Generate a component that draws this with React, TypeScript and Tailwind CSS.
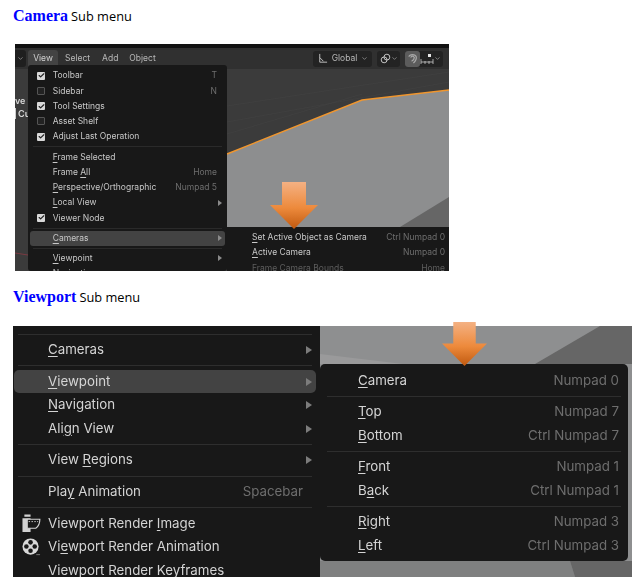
import React from "react";
import { ChevronDown, Check } from "lucide-react";

const sans = "[font-family:Inter,'Noto_Sans',sans-serif]";

type RowProps = {
    pre?: string;
    mark?: string;
    post?: string;
    keys?: string;
    sub?: boolean;
    active?: boolean;
    check?: boolean;
    dim?: boolean;
    icon?: React.ReactNode;
};

// underlined accelerator letter, as Blender draws it
const Label = ({ pre, mark, post }: RowProps) => (
    <span className="whitespace-pre">
        {pre}
        {mark && <span className="underline underline-offset-2 decoration-1">{mark}</span>}
        {post}
    </span>
);

const Arrow = ({ small }: { small?: boolean }) => (
    <span
        className={
            small
                ? "block w-0 h-0 border-y-[3px] border-y-transparent border-l-[4px] border-l-[#8a8a8a]"
                : "block w-0 h-0 border-y-[4px] border-y-transparent border-l-[6px] border-l-[#7c7c7c]"
        }
    />
);

const SmallRow = (props: RowProps) => (
    <div
        className={`flex items-center h-[15.25px] shrink-0 mx-[2px] rounded-[3px] text-[8.5px] ${
            props.active ? "bg-[#434343]" : ""
        } ${props.dim ? "text-[#6a6a6a]" : "text-[#c8c8c8]"}`}
    >
        <span className="w-[22.7px] flex justify-end shrink-0 pr-[7.7px]">
            {props.check === true && (
                <span className="w-[8px] h-[8px] rounded-[1px] bg-[#d8d8d8] flex items-center justify-center">
                    <Check size={7} strokeWidth={4} color="#222" />
                </span>
            )}
            {props.check === false && (
                <span className="w-[8px] h-[8px] rounded-[1px] border border-[#555] bg-[#222]" />
            )}
        </span>
        <span className="flex-1">
            <Label {...props} />
        </span>
        {props.keys && <span className="text-[#6e6e6e] mr-[8px]">{props.keys}</span>}
        {props.sub && (
            <span className="mr-[3px]">
                <Arrow small />
            </span>
        )}
    </div>
);

const BigRow = (props: RowProps) => (
    <div
        className={`flex items-center h-[23.6px] shrink-0 text-[13.3px] text-[#d4d4d4] ${
            props.active ? "bg-[#434343] rounded-[5px]" : ""
        }`}
    >
        <span className="w-[34px] flex justify-center shrink-0">{props.icon}</span>
        <span className="flex-1">
            <Label {...props} />
        </span>
        {props.keys && <span className="text-[#6e6e6e] mr-[13px]">{props.keys}</span>}
        {props.sub && (
            <span className="mr-[4px]">
                <Arrow />
            </span>
        )}
    </div>
);

const SmallSep = () => (
    <div className="h-[5px] flex items-center shrink-0 px-[5px]">
        <div className="h-px w-full bg-[#2a2a2a]" />
    </div>
);

const BigSep = () => (
    <div className="h-[8px] flex items-center shrink-0 px-[4px]">
        <div className="h-px w-full bg-[#2e2e2e]" />
    </div>
);

const DownArrow = ({ id, className }: { id: string; className: string }) => (
    <svg viewBox="0 0 48 47" className={className}>
        <defs>
            <linearGradient id={id} x1="0" y1="0" x2="0" y2="1">
                <stop offset="0" stopColor="#f4b183" />
                <stop offset="0.55" stopColor="#ed8a3c" />
                <stop offset="1" stopColor="#c0590f" />
            </linearGradient>
        </defs>
        <path d="M12 0H36V23H48L24 47L0 23H12Z" fill={`url(#${id})`} />
    </svg>
);

const FilmIcon = () => (
    <svg viewBox="0 0 20 20" className="w-[19px] h-[19px]">
        <path d="M2.5 0.5h6.5v2.5h-6.5z M0.5 4.5h8.5v14.5h-8.5z" fill="#d2d2d2" />
        <path d="M5.5 5.5H18.8C18.8 9.5 17.5 13 14.5 15H5.5Z" fill="#181818" stroke="#d2d2d2" strokeWidth="1.2" />
        <path d="M7 8h1.5M10 8h1.5M13 8h1.5M16 8h1" stroke="#d2d2d2" strokeWidth="1" />
    </svg>
);

const ReelIcon = () => (
    <svg viewBox="0 0 20 20" className="w-[19px] h-[19px]">
        <circle cx="9" cy="9" r="8.5" fill="#d8d8d8" />
        <circle cx="9" cy="4.6" r="2.4" fill="#181818" />
        <circle cx="9" cy="13.4" r="2.4" fill="#181818" />
        <circle cx="4.6" cy="9" r="2.4" fill="#181818" />
        <circle cx="13.4" cy="9" r="2.4" fill="#181818" />
        <path d="M15 17.5h4" stroke="#777" strokeWidth="1" />
    </svg>
);

const Heading = ({ word, className }: { word: string; className: string }) => (
    <div className={`h-[20px] flex items-center pl-[13px] text-black ${className}`}>
        <span className="[font-family:'Liberation_Serif',serif] font-bold text-[16px] text-[#0000ff]">{word}</span>
        <span className="[font-family:'Open_Sans',sans-serif] text-[12.8px] ml-[3px] mt-[2px]">Sub menu</span>
    </div>
);

const CameraShot = () => (
    <div className={`relative ml-[15px] mt-[18px] w-[434px] h-[227px] overflow-hidden bg-[#3c3c3c] ${sans} blur-[0.3px]`}>
        <svg viewBox="0 0 434 227" className="absolute inset-0 w-full h-full">
            <path d="M0 25H434V227H0Z" fill="#3b3b3b" />
            <path d="M212 110L347 56L434 46V227H212Z" fill="#8d8e8f" />
            <path d="M385 183L434 153V183Z" fill="#666666" />
            <path d="M212 110L347 56L434 46" fill="none" stroke="#f0962e" strokeWidth="1.4" />
            <path d="M0 209L13 211" stroke="#7a3a42" strokeWidth="1" />
            <path d="M212 62L434 28M212 78L434 38M212 90L347 50" stroke="#444" strokeWidth="0.5" />
        </svg>

        {/* header */}
        <div className="absolute inset-x-0 top-0 h-[25px] flex flex-col">
            <div className="h-[4px] bg-[#111111]" />
            <div className="flex-1 bg-[#303030] flex items-center text-[8.5px] text-[#b8b8b8]">
                <span className="w-[11px] h-[17px] bg-[#1f1f1f] rounded-r-[3px] flex items-center justify-center">
                    <ChevronDown size={7} />
                </span>
                <span className="ml-[2px] w-[30px] h-[17px] bg-[#434343] rounded-t-[3px] flex items-center justify-center text-[#d0d0d0]">View</span>
                <span className="ml-[7px]">Select</span>
                <span className="ml-[12px]">Add</span>
                <span className="ml-[11px]">Object</span>
                <span className="ml-auto flex items-center gap-[5px] mr-[6px]">
                    <span className="w-[59px] h-[16px] rounded-[3px] bg-[#232323] flex items-center justify-center gap-[4px]">
                        <svg viewBox="0 0 12 12" className="w-[11px] h-[11px]" fill="none" stroke="#c8c8c8" strokeWidth="1">
                            <path d="M3 1V10H11M3 5L7 9" />
                        </svg>
                        Global
                        <ChevronDown size={7} />
                    </span>
                    <span className="w-[23px] h-[16px] rounded-[3px] bg-[#232323] flex items-center justify-center">
                        <svg viewBox="0 0 12 12" className="w-[11px] h-[11px]" fill="none" stroke="#d0d0d0" strokeWidth="1">
                            <circle cx="4.5" cy="7.5" r="3.2" />
                            <circle cx="7.5" cy="4.5" r="3.2" />
                        </svg>
                        <ChevronDown size={7} />
                    </span>
                    <span className="w-[38px] flex items-center h-[16px] rounded-[3px] bg-[#232323]">
                        <span className="w-[15px] h-[16px] rounded-[3px] bg-[#5c5c5c] flex items-center justify-center">
                            <svg viewBox="0 0 12 12" className="w-[11px] h-[11px]" fill="none" stroke="#a8a8a8" strokeWidth="1.4">
                                <path d="M2 4C3 1 9 1 10 4C11 7 9 9 7 11M4 5C5 3 7 3 8 5C8 7 7 8 5 9" />
                            </svg>
                        </span>
                        <svg viewBox="0 0 14 12" className="w-[14px] h-[12px]" fill="none" stroke="#c8c8c8" strokeWidth="0.8">
                            <path d="M1 6V11M5 8V11M9 8V11M13 6V11M1 9H13" />
                            <rect x="8" y="1" width="3" height="3" fill="#e8e8e8" stroke="none" />
                        </svg>
                        <ChevronDown size={7} />
                    </span>
                </span>
            </div>
        </div>

        {/* clipped tool hints at the viewport's left edge */}
        <span className="absolute left-0 top-[50px] text-[9px] font-semibold text-[#d8d8d8]">ve</span>
        <span className="absolute left-[3px] top-[63px] text-[9px] font-semibold text-[#d8d8d8]">Cu</span>
        <span className="absolute left-0 top-[64px] w-[1px] h-[11px] bg-[#cccccc]" />

        {/* View menu */}
        <div className="absolute left-[13px] top-[21px] w-[199px] h-[206px] bg-[#181818] rounded-[3px] flex flex-col pt-[3px]">
            <SmallRow pre="Toolbar" keys="T" check />
            <SmallRow pre="Sidebar" keys="N" check={false} />
            <SmallRow pre="Tool Settings" check />
            <SmallRow pre="Asset Shelf" check={false} />
            <SmallRow pre="Adjust Last Operation" check />
            <SmallSep />
            <SmallRow mark="F" post="rame Selected" />
            <SmallRow pre="Frame " mark="A" post="ll" keys="Home" />
            <SmallRow mark="P" post="erspective/Orthographic" keys="Numpad 5" />
            <SmallRow mark="L" post="ocal View" sub />
            <SmallRow pre="Viewer Node" check />
            <SmallSep />
            <SmallRow mark="C" post="ameras" sub active />
            <SmallSep />
            <SmallRow mark="V" post="iewpoint" sub />
            <SmallRow mark="N" post="avigation" sub />
        </div>

        {/* Cameras submenu */}
        <div className="absolute left-[212px] top-[183px] w-[222px] h-[44px] bg-[#181818] flex flex-col pt-[3px] text-[8.5px] text-[#c8c8c8]">
            <div className="flex items-center justify-between h-[15.2px] shrink-0 pl-[25px] pr-[4px]">
                <Label mark="S" post="et Active Object as Camera" />
                <span className="text-[#6e6e6e]">Ctrl Numpad 0</span>
            </div>
            <div className="flex items-center justify-between h-[15.2px] shrink-0 pl-[25px] pr-[4px]">
                <Label mark="A" post="ctive Camera" />
                <span className="text-[#6e6e6e]">Numpad 0</span>
            </div>
            <div className="flex items-center justify-between h-[15.2px] shrink-0 pl-[25px] pr-[4px] text-[#5e5e5e]">
                <span>Frame Camera Bounds</span>
                <span>Home</span>
            </div>
        </div>

        <DownArrow id="camera-arrow" className="absolute left-[255px] top-[138px] w-[48px] h-[47px]" />
    </div>
);

const SubRow = ({ mark, post, pre, keys }: RowProps) => (
    <div className="flex items-center justify-between h-[23.6px] shrink-0 pl-[38px] pr-[9px] text-[13.3px] text-[#d4d4d4]">
        <Label pre={pre} mark={mark} post={post} />
        <span className="text-[#6e6e6e]">{keys}</span>
    </div>
);

const SubSep = () => (
    <div className="h-[8px] flex items-center shrink-0 px-[7px]">
        <div className="h-px w-full bg-[#2e2e2e]" />
    </div>
);

const ViewportShot = () => (
    <div className={`relative ml-[13px] mt-[19px] w-[619px] h-[251px] bg-[#8e8f90] ${sans}`}>
        <svg viewBox="0 0 619 251" className="absolute inset-0 w-full h-full">
            <path d="M307 0H619V251H307Z" fill="#8e8f90" />
            <path d="M307 28L390 38H307Z" fill="#9a9a9b" />
            <path d="M587 0H619V38H522Z" fill="#666666" />
            <path d="M307 235H557L562 251H307Z" fill="#7f8080" />
            <path d="M557 235H619V251H562Z" fill="#666666" />
        </svg>

        <div className="absolute left-0 top-0 w-[307px] h-[251px] overflow-hidden bg-[#181818] flex flex-col pt-[4.2px] pl-[1px] pr-[4px] blur-[0.2px]">
            <BigSep />
            <BigRow mark="C" post="ameras" sub />
            <BigSep />
            <BigRow mark="V" post="iewpoint" sub active />
            <BigRow mark="N" post="avigation" sub />
            <BigRow pre="Ali" mark="g" post="n View" sub />
            <BigSep />
            <BigRow pre="View " mark="R" post="egions" sub />
            <BigSep />
            <BigRow pre="Pla" mark="y" post=" Animation" keys="Spacebar" />
            <BigSep />
            <BigRow pre="Viewport Render " mark="I" post="mage" icon={<FilmIcon />} />
            <BigRow pre="Vi" mark="e" post="wport Render Animation" icon={<ReelIcon />} />
            <BigRow pre="Viewport Render Keyframes" />
        </div>

        <div className="absolute left-[307px] top-[38px] w-[308px] h-[197px] bg-[#181818] rounded-[5px] flex flex-col pt-[4.7px] blur-[0.2px]">
            <SubRow mark="C" post="amera" keys="Numpad 0" />
            <SubSep />
            <SubRow mark="T" post="op" keys="Numpad 7" />
            <SubRow mark="B" post="ottom" keys="Ctrl Numpad 7" />
            <SubSep />
            <SubRow mark="F" post="ront" keys="Numpad 1" />
            <SubRow pre="B" mark="a" post="ck" keys="Ctrl Numpad 1" />
            <SubSep />
            <SubRow mark="R" post="ight" keys="Numpad 3" />
            <SubRow mark="L" post="eft" keys="Ctrl Numpad 3" />
        </div>

        <DownArrow id="viewport-arrow" className="absolute left-[428px] top-[-4px] w-[47px] h-[44px]" />
    </div>
);

export default function App() {
    return (
        <div className="w-[632px] h-[577px] bg-white overflow-hidden pt-[6px]">
            <Heading word="Camera" className="" />
            <CameraShot />
            <Heading word="Viewport" className="mt-[16px]" />
            <ViewportShot />
        </div>
    );
}
